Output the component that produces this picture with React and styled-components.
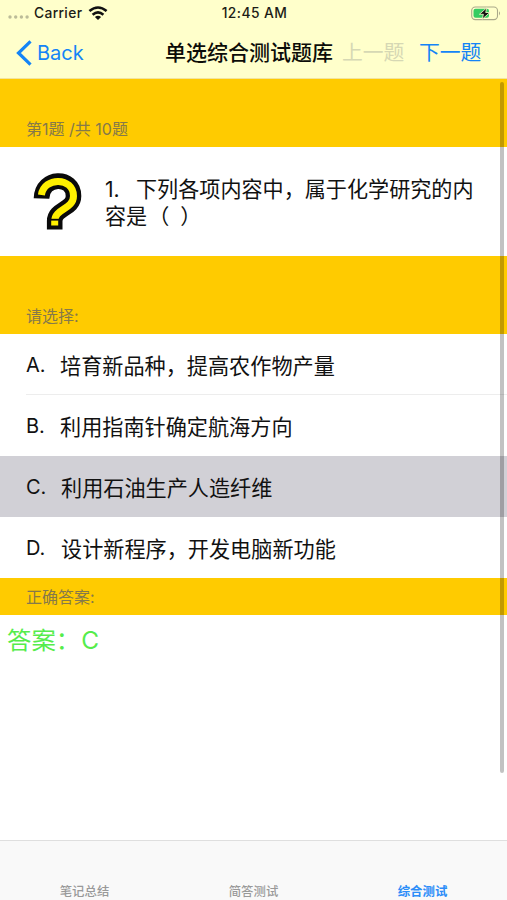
import React from "react";
import styled, { createGlobalStyle } from "styled-components";

const GlobalStyle = createGlobalStyle`
  * { box-sizing: border-box; }
  body {
    margin: 0;
    background: #fff;
    color: #111;
    font-family: Inter, "Noto Sans CJK SC", sans-serif;
  }
`;

const Screen = styled.div`
  position: relative;
  width: 507px;
  height: 900px;
  overflow: hidden;
  display: flex;
  flex-direction: column;
  background: #fff;
  white-space: nowrap;
`;

const Header = styled.header`
  height: 79px;
  flex: none;
  background: #ffffcb;
  border-bottom: 1px solid #f3e49c;
`;

const StatusBar = styled.div`
  height: 26px;
  display: grid;
  grid-template-columns: 1fr auto 1fr;
  align-items: center;
  padding: 0 6px 0 8px;
  font-size: 13.8px;
  line-height: 16px;
  font-weight: 500;
  color: #1c1c16;
`;

const Carrier = styled.div`
  display: flex;
  align-items: center;
  gap: 5px;
`;

const CarrierName = styled.span`
  width: 49px;
  padding-bottom: 1px;
  letter-spacing: 0.35px;
`;

const Clock = styled.div`
  padding-bottom: 1px;
  letter-spacing: 0.45px;
`;

const Battery = styled.svg`
  justify-self: end;
`;

const NavBar = styled.nav`
  height: 54px;
  display: flex;
  align-items: center;
  padding-left: 16px;
  line-height: 54px;
`;

const NavLink = styled.a`
  display: flex;
  align-items: center;
  width: ${(p) => p.$width}px;
  font-size: ${(p) => p.$size || 20.8}px;
  color: ${(p) => (p.$disabled ? "#d6d8b4" : "#1484f6")};
`;

const BackLabel = styled.span`
  margin-left: 5px;
`;

const Title = styled.h1`
  margin: 0;
  width: 177px;
  font-size: 21px;
  font-weight: 500;
  color: #0c0c08;
`;

const SectionHeader = styled.div`
  height: ${(p) => p.$height}px;
  flex: none;
  display: flex;
  align-items: flex-end;
  padding: 0 26px 6px;
  background: #ffcb00;
  color: #85794a;
  font-size: 16px;
  line-height: 24px;
`;

const Question = styled.section`
  height: 109px;
  flex: none;
  display: flex;
  align-items: center;
  padding-left: 30px;
`;

const QuestionText = styled.p`
  margin: 2px 0 0 21px;
  font-size: 21.1px;
  line-height: 27px;
`;

const Number = styled.span`
  display: inline-block;
  width: 31px;
`;

const Blank = styled.span`
  margin-left: 1px;
  word-spacing: 5px;
`;

const Options = styled.div`
  flex: none;
`;

const Option = styled.div`
  height: 61px;
  display: flex;
  padding-left: 26px;
  background: ${(p) => (p.$selected ? "#d1d0d6" : "#fff")};
`;

const OptionBody = styled.div`
  flex: 1;
  display: flex;
  align-items: center;
  font-size: 21.15px;
  border-bottom: 1px solid ${(p) => (p.$divider ? "#ededed" : "transparent")};
`;

const Letter = styled.span`
  width: ${(p) => p.$width}px;
  padding-top: 2px;
  font-size: 20px;
`;

const Answer = styled.div`
  flex: 1;
  padding: 7px 7px 0;
  font-size: 24.4px;
  line-height: 36px;
  color: #55ec4b;
`;

const AnswerLetter = styled.span`
  margin-left: 1px;
`;

const TabBar = styled.nav`
  height: 60px;
  flex: none;
  display: grid;
  grid-template-columns: repeat(3, 1fr);
  align-items: end;
  background: #f9f9f9;
  border-top: 1px solid #dfdfdf;
`;

const Tab = styled.a`
  text-align: center;
  font-size: 12.4px;
  line-height: 17px;
  font-weight: ${(p) => (p.$active ? 700 : 500)};
  color: ${(p) => (p.$active ? "#2c8df8" : "#999")};
`;

const Scrollbar = styled.div`
  position: absolute;
  top: 82px;
  right: 3px;
  width: 4px;
  height: 691px;
  border-radius: 2px;
  background: rgba(0, 0, 0, 0.24);
`;

const options = [
  { letter: "A.", text: "培育新品种，提高农作物产量", width: 34, divider: true },
  { letter: "B.", text: "利用指南针确定航海方向", width: 34 },
  { letter: "C.", text: "利用石油生产人造纤维", width: 35, selected: true },
  { letter: "D.", text: "设计新程序，开发电脑新功能", width: 35 },
];

const tabs = ["笔记总结", "简答测试", "综合测试"];

const SignalDots = () => (
  <svg width="21" height="14" fill="#bcbc98">
    <circle cx="2" cy="11" r="1.7" />
    <circle cx="7.7" cy="11" r="1.7" />
    <circle cx="13.4" cy="11" r="1.7" />
    <circle cx="19.1" cy="11" r="1.7" />
  </svg>
);

const WifiIcon = () => (
  <svg width="20" height="14" viewBox="0 0 20 14" fill="none" stroke="#111" strokeWidth="2.6">
    <path d="M1.4 5.1Q10-2.1 18.6 5.1" />
    <path d="M4.6 8.7Q10 4.1 15.4 8.7" />
    <path d="M10 14L6.9 10.9Q10 8.5 13.1 10.9Z" fill="#111" stroke="none" />
  </svg>
);

const BatteryIcon = () => (
  <Battery width="30" height="15" viewBox="0 0 30 15">
    <rect x="0.7" y="1" width="25.8" height="12.6" rx="3.6" fill="none" stroke="#aaa98a" strokeWidth="1.1" />
    <path d="M28 5.2Q30 7.2 28 9.4Z" fill="#aaa98a" />
    <rect x="2.5" y="2.8" width="15.5" height="9" rx="2" fill="#35cc62" />
    <path d="M15.8 1.8L8.4 8.3H12.4L11.2 13.2L18.8 6.5H14.7Z" fill="#111" stroke="#ffffcb" strokeWidth="0.8" />
  </Battery>
);

const QuestionMark = () => (
  <svg width="54" height="62" viewBox="0 0 54 62" fill="none">
    <path d="M11.5 27.5C12 5 43.5 4.5 43.5 25C43.5 38.5 24.7 37.5 24.7 50V58.5" stroke="#0a0a0a" strokeWidth="15.6" />
    <path d="M11.4 24C14 5.5 43.5 6 43.5 25C43.5 38.5 24.7 37.5 24.7 50V54.5" stroke="#fff000" strokeWidth="7" />
    <path d="M20 48.7H30" stroke="#0a0a0a" strokeWidth="1.8" />
  </svg>
);

export default function App() {
  return (
    <Screen>
      <GlobalStyle />
      <Header>
        <StatusBar>
          <Carrier>
            <SignalDots />
            <CarrierName>Carrier</CarrierName>
            <WifiIcon />
          </Carrier>
          <Clock>12:45 AM</Clock>
          <BatteryIcon />
        </StatusBar>
        <NavBar>
          <NavLink $width={149} $size={20}>
            <svg width="16" height="26" viewBox="0 0 16 26" fill="none" stroke="#1484f6" strokeWidth="3.2">
              <path d="M14.5 1.4L2.5 13L14.5 24.6" />
            </svg>
            <BackLabel>Back</BackLabel>
          </NavLink>
          <Title>单选综合测试题库</Title>
          <NavLink $width={77} $disabled>上一题</NavLink>
          <NavLink $width={66}>下一题</NavLink>
        </NavBar>
      </Header>
      <SectionHeader $height={68}>第1题 /共 10题</SectionHeader>
      <Question>
        <QuestionMark />
        <QuestionText>
          <Number>1.</Number>下列各项内容中，属于化学研究的内
          <br />
          容是<Blank>（ ）</Blank>
        </QuestionText>
      </Question>
      <SectionHeader $height={78}>请选择:</SectionHeader>
      <Options>
        {options.map((o) => (
          <Option key={o.letter} $selected={o.selected}>
            <OptionBody $divider={o.divider}>
              <Letter $width={o.width}>{o.letter}</Letter>
              {o.text}
            </OptionBody>
          </Option>
        ))}
      </Options>
      <SectionHeader $height={37}>正确答案:</SectionHeader>
      <Answer>
        答案：<AnswerLetter>C</AnswerLetter>
      </Answer>
      <TabBar>
        {tabs.map((label, i) => (
          <Tab key={label} $active={i === 2}>{label}</Tab>
        ))}
      </TabBar>
      <Scrollbar />
    </Screen>
  );
}
